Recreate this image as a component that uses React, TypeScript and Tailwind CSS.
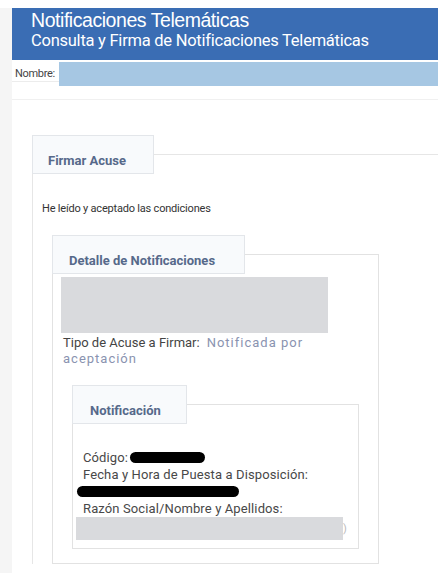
export default function App() {
  const tabText = "font-['Roboto'] text-[13px] font-bold leading-[16px] text-[#56698a]";
  const tabBox = "relative z-10 mb-[-20px] flex h-[39px] items-center border border-[#e3e6ea] bg-[#f8fafc] pt-[12px]";
  return (
    <div className="flex h-[573px] w-[438px] overflow-hidden bg-white font-['Roboto',sans-serif]">
      <div className="mt-[8px] w-[12px] shrink-0 bg-[#f5f5f5]" />
      <div className="flex min-w-0 flex-1 flex-col">
        <div className="mt-[8px] flex h-[52px] flex-col bg-[#3a6db4] pl-[19px] pt-[1px] text-white">
          <div className="font-['Liberation_Sans',sans-serif] text-[19.5px] leading-[22px] tracking-[-0.45px]">
            Notificaciones Telemáticas
          </div>
          <div className="font-['Roboto',sans-serif] text-[16.5px] leading-[19px] tracking-[-0.25px]">
            Consulta y Firma de Notificaciones Telemáticas
          </div>
        </div>
        <div className="mt-[1px] flex h-[21px] items-start border-b border-[#ececec]">
          <span className="ml-[3px] mt-[6px] text-[11px] leading-[13px] tracking-[-0.3px] text-[#444]">Nombre:</span>
          <div className="ml-[4px] mt-[1px] h-[24px] flex-1 bg-[#a6c7e3]" />
        </div>
        <div className="h-[18px] border-b border-[#f0f0f0]" />

        <div className="ml-[20px] mt-[35px] flex flex-col">
          <div className={tabBox + " w-[122px] pl-[15px]"}>
            <span className={tabText}>Firmar Acuse</span>
          </div>
          <div className="flex flex-col border-l border-t border-[#e6e6e6] pl-[9px] pt-[47px]">
            <div className="text-[11px] leading-[14px] tracking-[-0.2px] text-[#333]">
              He leído y aceptado las condiciones
            </div>

            <div className="ml-[10px] mt-[19px] flex flex-col">
              <div className={tabBox + " w-[193px] pl-[16px]"}>
                <span className={tabText}>Detalle de Notificaciones</span>
              </div>
              <div className="flex w-[327px] flex-col border border-[#e2e2e2] pb-[14px] pl-[8px] pt-[22px]">
                <div className="h-[56px] w-[267px] bg-[#d9dadd]" />
                <div className="ml-[2px] mt-[2px] text-[13px] leading-[16px] text-[#444]">
                  Tipo de Acuse a Firmar:
                  <span className="ml-[7px] tracking-[1px] text-[#8a93b0]">
                    Notificada por
                    <br />
                    aceptación
                  </span>
                </div>

                <div className="ml-[11px] mt-[18px] flex flex-col">
                  <div className={tabBox + " w-[115px] pl-[17px]"}>
                    <span className={tabText}>Notificación</span>
                  </div>
                  <div className="flex w-[287px] flex-col border border-[#e2e2e2] pb-[8px] pl-[10px] pt-[44px] text-[13px] leading-[17px] tracking-[0.12px] text-[#484848]">
                    <div className="flex items-center">
                      <span>Código:</span>
                      <span className="ml-[2px] inline-block h-[11px] w-[75px] rounded-full bg-black" />
                    </div>
                    <div>Fecha y Hora de Puesta a Disposición:</div>
                    <div className="flex h-[17px] items-center">
                      <span className="-ml-[6px] inline-block h-[11px] w-[162px] rounded-full bg-black" />
                    </div>
                    <div>Razón Social/Nombre y Apellidos:</div>
                    <div className="flex h-[23px] items-center">
                      <span className="-ml-[7px] inline-block h-[23px] w-[267px] bg-[#d9dadd]" />
                      <span className="text-[11px] text-[#bbb]">)</span>
                    </div>
                  </div>
                </div>
              </div>
            </div>
          </div>
        </div>
      </div>
    </div>
  );
}
